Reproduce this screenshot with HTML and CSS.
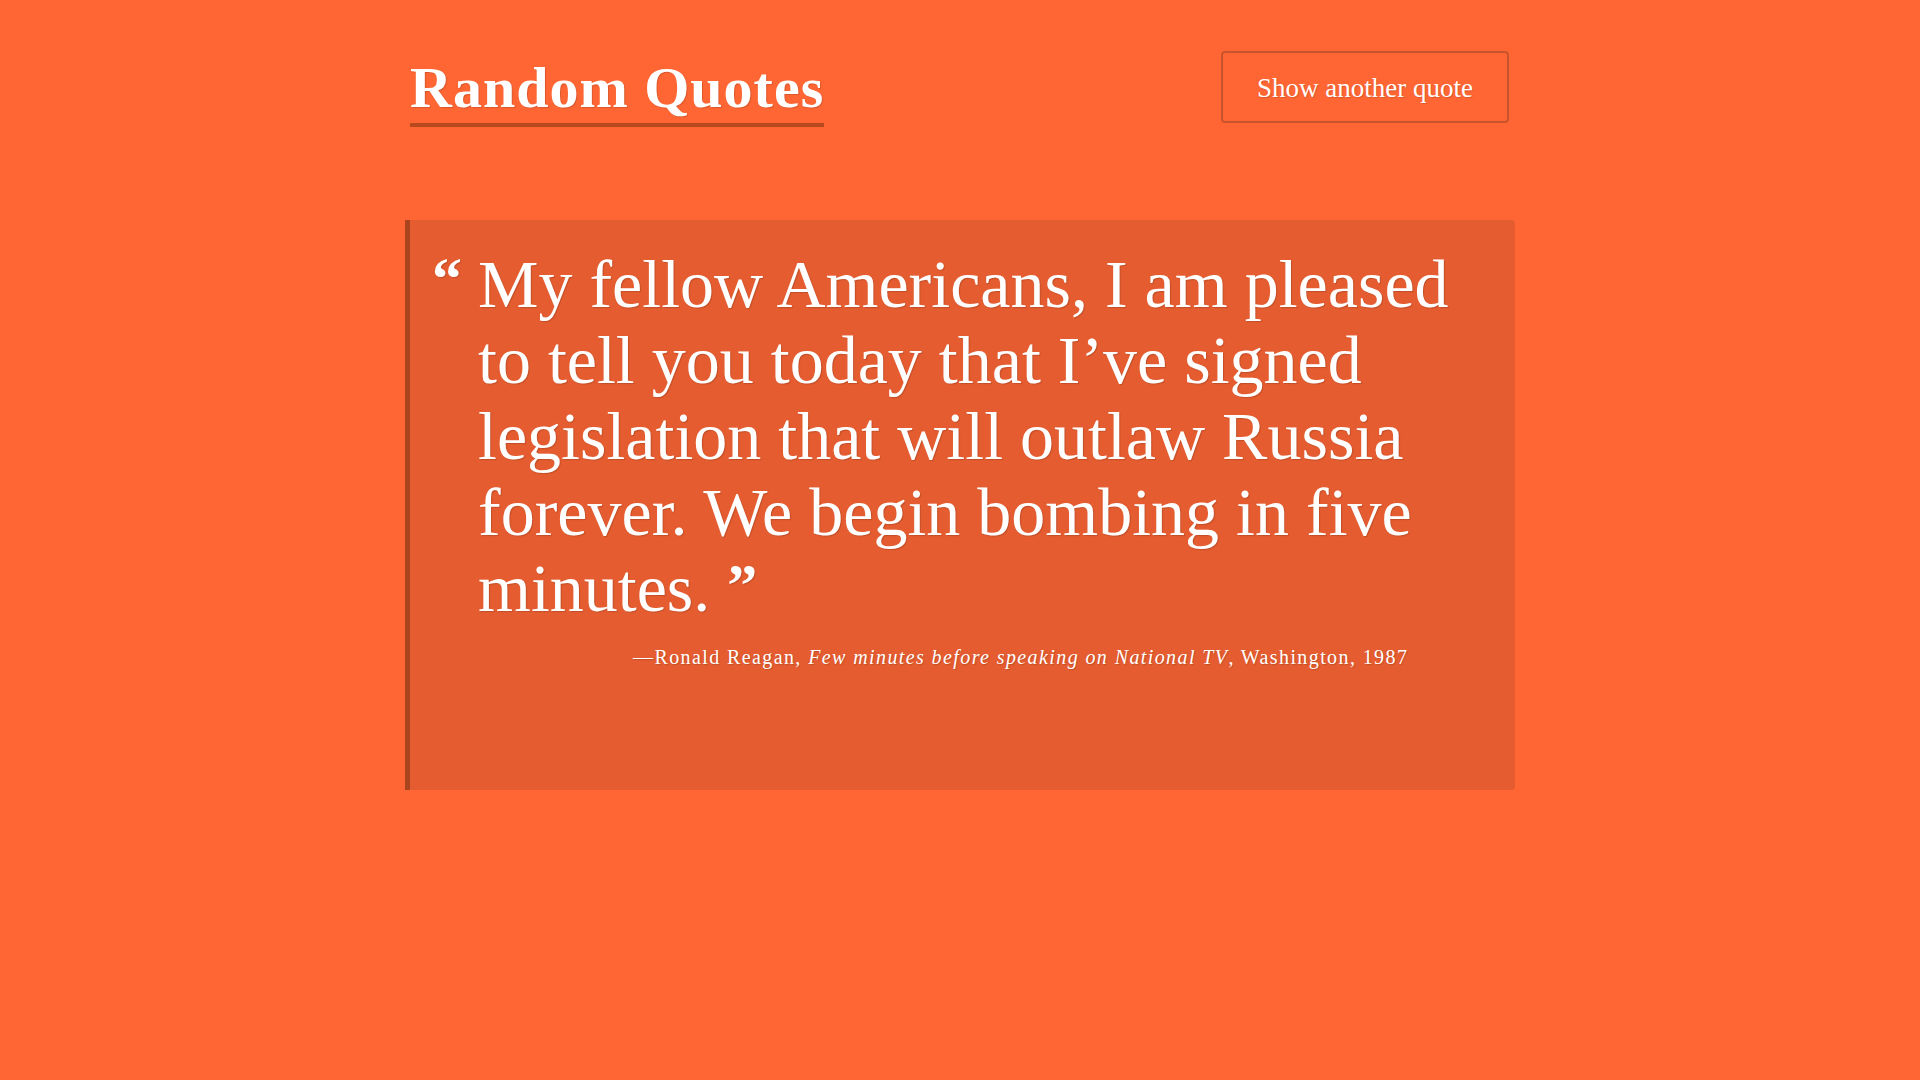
FILE: index.html
```html
<!DOCTYPE html>
<html lang="en">
<head>
<meta charset="utf-8">
<title>Random Quotes</title>
<link rel="stylesheet" href="styles.css">
</head>
<body>
<div class="container">
  <header class="header">
    <h1 class="title">Random Quotes</h1>
    <button class="btn" type="button">Show another quote</button>
  </header>
  <blockquote class="quote">
    <p class="quote-text"><span class="mark-open">“</span>My fellow Americans, I am pleased to tell you today that I’ve signed legislation that will outlaw Russia forever. We begin bombing in five minutes. <span class="mark-close">”</span></p>
    <footer class="cite">—Ronald Reagan, <em>Few minutes before speaking on National TV</em>, Washington, 1987</footer>
  </blockquote>
</div>
</body>
</html>
```

FILE: styles.css
```css
html, body {
  margin: 0;
  padding: 0;
}

body {
  background: #ff6633;
  color: #ffffff;
  font-family: "Liberation Serif", "Times New Roman", serif;
  min-height: 1080px;
}

.container {
  width: 1110px;
  margin: 0 auto;
}

.header {
  display: flex;
  justify-content: space-between;
  align-items: flex-start;
  padding: 51px 6px 0 5px;
}

.title {
  margin: 2px 0 0 0;
  font-size: 58px;
  line-height: 70px;
  font-weight: 700;
  letter-spacing: 1px;
  border-bottom: 4px solid #b8491f;
  text-shadow: 1px 1px 1px rgba(0, 0, 0, 0.15);
}

.btn {
  box-sizing: border-box;
  height: 72px;
  padding: 3px 34px 0;
  background: transparent;
  border: 2px solid #c9532a;
  border-radius: 4px;
  color: #ffffff;
  font-family: "Liberation Serif", "Times New Roman", serif;
  font-size: 27px;
  text-shadow: 1px 1px 1px rgba(0, 0, 0, 0.15);
  cursor: pointer;
}

.quote {
  margin: 93px 0 0 0;
  padding: 26px 27px 118px 68px;
  background: #e45c2f;
  border-left: 5px solid #a9441f;
  border-radius: 0 4px 4px 0;
}

.quote-text {
  position: relative;
  max-width: 1010px;
  margin: 0;
  font-size: 68px;
  line-height: 76px;
  text-shadow: 1px 1px 1px rgba(0, 0, 0, 0.15);
}

.mark-open {
  position: absolute;
  left: -46px;
  top: 3px;
  font-size: 60px;
  line-height: 60px;
  font-weight: 700;
}

.mark-close {
  position: relative;
  top: -6px;
  font-size: 60px;
  line-height: 0;
  font-weight: 700;
}

.cite {
  margin: 16px 0 0 155px;
  font-size: 20px;
  line-height: 30px;
  letter-spacing: 1.4px;
  text-shadow: 1px 1px 1px rgba(0, 0, 0, 0.15);
}

.cite em {
  font-style: italic;
}
```
